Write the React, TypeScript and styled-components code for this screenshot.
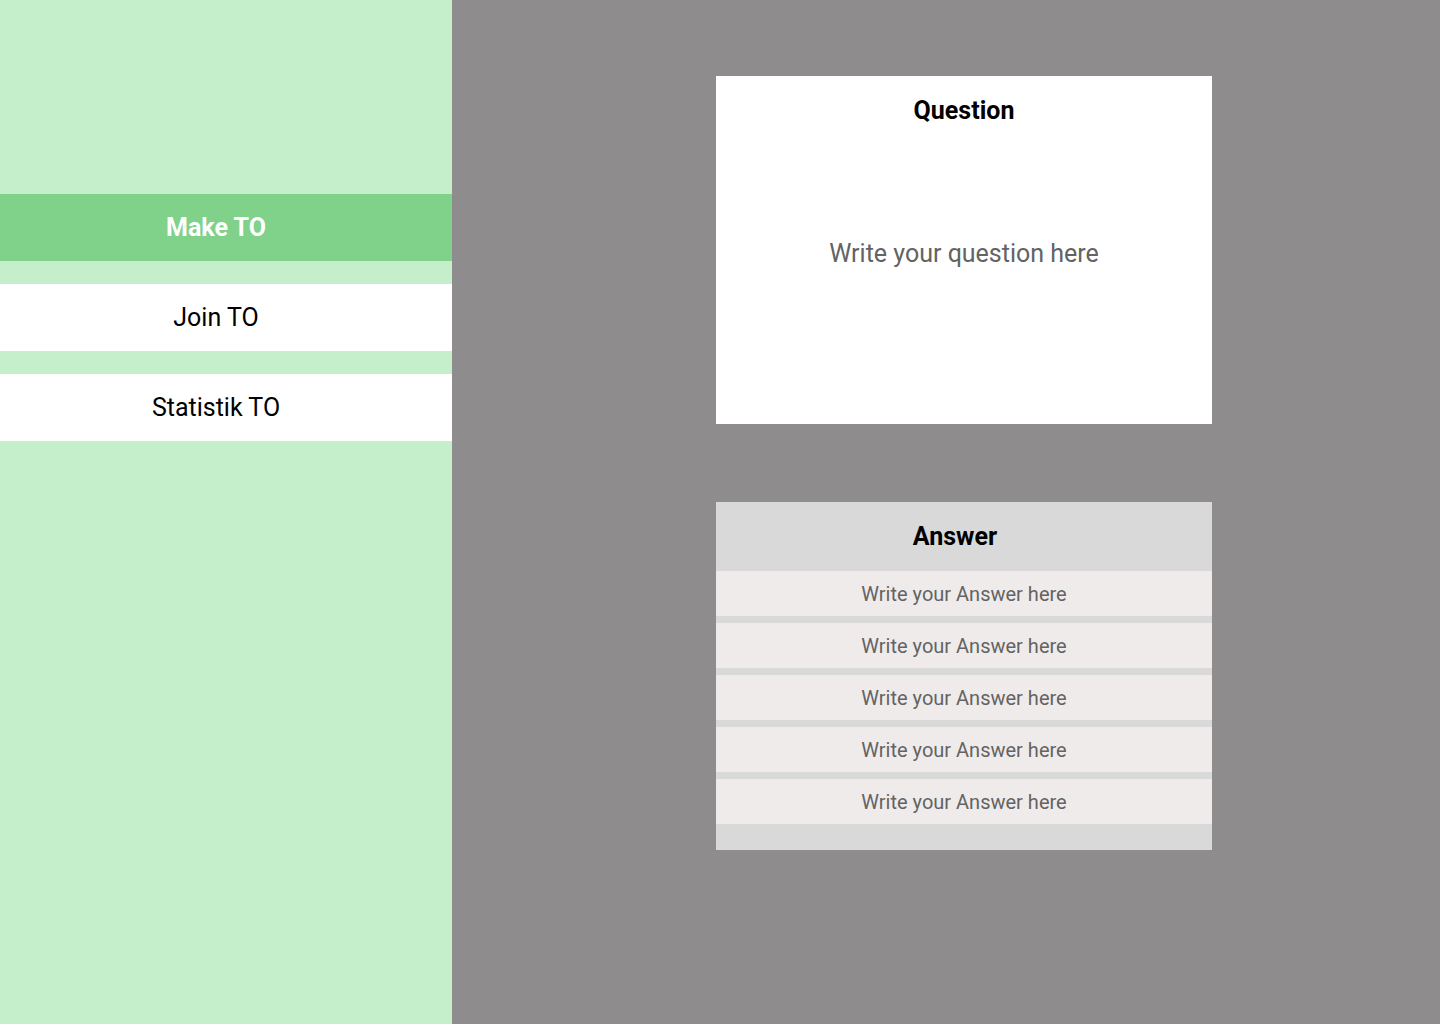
import React from 'react';
import styled, { createGlobalStyle } from 'styled-components';

const GlobalStyle = createGlobalStyle`
  html, body {
    margin: 0;
    padding: 0;
  }
  body {
    font-family: Roboto, "Noto Sans", Arial, sans-serif;
  }
  * {
    box-sizing: border-box;
  }
`;

const Page = styled.div`
  display: flex;
  width: 1440px;
  height: 1024px;
  overflow: hidden;
`;

const Sidebar = styled.nav`
  width: 452px;
  flex-shrink: 0;
  background-color: #c5efca;
  padding-top: 194px;
  display: flex;
  flex-direction: column;
  gap: 23px;
`;

const MenuButton = styled.button<{ active?: boolean }>`
  height: 67px;
  width: 100%;
  border: none;
  margin: 0;
  padding: 0 20px 0 0;
  background-color: ${({ active }) => (active ? '#80d18a' : '#ffffff')};
  color: ${({ active }) => (active ? '#ffffff' : '#000000')};
  font-family: Roboto, sans-serif;
  font-size: 25px;
  font-weight: ${({ active }) => (active ? 700 : 400)};
  text-align: center;
  cursor: pointer;
`;

const Workspace = styled.main`
  flex: 1;
  background-color: #8e8c8d;
  padding: 76px 0 0 264px;
  display: flex;
  flex-direction: column;
  gap: 78px;
`;

const QuestionCard = styled.section`
  width: 496px;
  height: 348px;
  background-color: #ffffff;
  display: flex;
  flex-direction: column;
  align-items: center;
`;

const CardTitle = styled.h2<{ shift?: number }>`
  margin: 0;
  font-family: Roboto, sans-serif;
  font-size: 25px;
  font-weight: 700;
  color: #000000;
  line-height: 29px;
  padding-right: ${({ shift }) => shift ?? 0}px;
`;

const QuestionTitle = styled(CardTitle)`
  margin-top: 20px;
`;

const QuestionInput = styled.div`
  flex: 1;
  display: flex;
  align-items: center;
  justify-content: center;
  padding-bottom: 42px;
  font-size: 25px;
  color: #636363;
`;

const AnswerCard = styled.section`
  width: 496px;
  height: 348px;
  background-color: #d9d9d9;
  display: flex;
  flex-direction: column;
`;

const AnswerHeader = styled.div`
  height: 69px;
  display: flex;
  align-items: center;
  justify-content: center;
`;

const AnswerList = styled.div`
  display: flex;
  flex-direction: column;
  gap: 7px;
`;

const AnswerRow = styled.div`
  height: 45px;
  background-color: #f0ebeb;
  display: flex;
  align-items: center;
  justify-content: center;
  font-size: 20px;
  color: #636363;
`;

const menuItems = ['Make TO', 'Join TO', 'Statistik TO'];

const App: React.FC = () => {
  const answers = Array.from({ length: 5 }, () => 'Write your Answer here');

  return (
    <>
      <GlobalStyle />
      <Page>
        <Sidebar>
          {menuItems.map((item, i) => (
            <MenuButton key={item} active={i === 0}>
              {item}
            </MenuButton>
          ))}
        </Sidebar>
        <Workspace>
          <QuestionCard>
            <QuestionTitle>Question</QuestionTitle>
            <QuestionInput>Write your question here</QuestionInput>
          </QuestionCard>
          <AnswerCard>
            <AnswerHeader>
              <CardTitle shift={18}>Answer</CardTitle>
            </AnswerHeader>
            <AnswerList>
              {answers.map((text, i) => (
                <AnswerRow key={i}>{text}</AnswerRow>
              ))}
            </AnswerList>
          </AnswerCard>
        </Workspace>
      </Page>
    </>
  );
};

export default App;
